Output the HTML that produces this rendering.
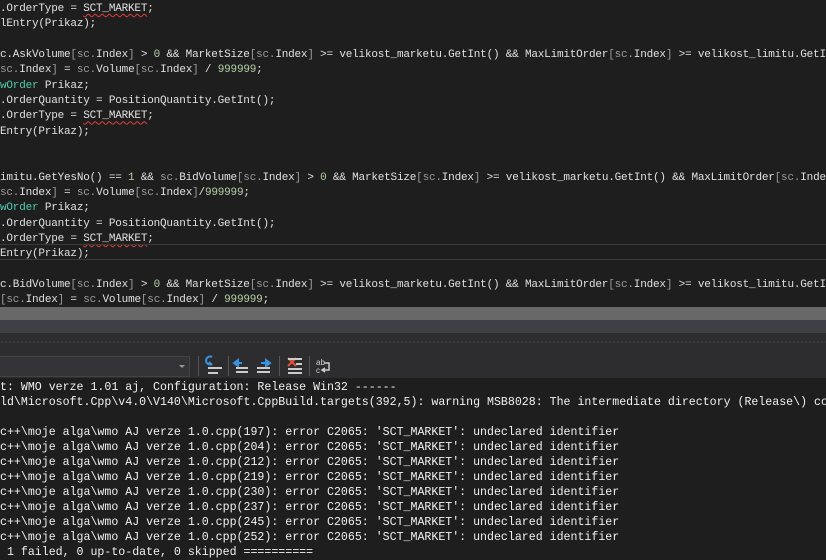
<!DOCTYPE html>
<html><head><meta charset="utf-8"><style>
body{margin:0;width:826px;height:560px;overflow:hidden;background:#1e1e1e;position:relative}
.code{position:absolute;left:0;top:0;width:826px;height:307px;background:#1e1e1e;overflow:hidden}
.code pre{margin:0;padding-top:2px;font-family:"Liberation Mono",monospace;font-size:11px;letter-spacing:-0.2px;line-height:15.33px;color:#e0e0e0;white-space:pre;overflow:hidden}
.g{color:#9b9b9b}.n{color:#b5cea8}.t{color:#4ec9b0}
.sq{text-decoration:underline wavy #e0403a;text-decoration-thickness:1px;text-underline-offset:2px}
.cur{position:absolute;left:0;top:244px;width:826px;height:14px;border-top:1px solid #3a3a3a;border-bottom:1px solid #3a3a3a}
.out{position:absolute;left:0;top:378px;width:826px;height:182px;background:#1e1e1e;overflow:hidden}
.out pre{margin:0;padding-top:2px;font-family:"Liberation Mono",monospace;font-size:11.6px;line-height:15px;color:#f1f1f1;white-space:pre;overflow:hidden}
.sep{position:absolute;top:356px;width:1px;height:20px;background:#555}
</style></head><body>
<div class="code"><pre>.OrderType = <span class="sq">SCT_MARKET</span>;
lEntry(Prikaz);

c.AskVolume<span class="g">[sc.</span>Index<span class="g">]</span> &gt; <span class="n">0</span> &amp;&amp; MarketSize<span class="g">[sc.</span>Index<span class="g">]</span> &gt;= velikost_marketu.GetInt() &amp;&amp; MaxLimitOrder<span class="g">[sc.</span>Index<span class="g">]</span> &gt;= velikost_limitu.GetInt()
<span class="g">sc.</span>Index<span class="g">]</span> = <span class="g">sc.</span>Volume<span class="g">[sc.</span>Index<span class="g">]</span> / <span class="n">999999</span>;
<span class="t">wOrder</span> Prikaz;
.OrderQuantity = PositionQuantity.GetInt();
.OrderType = <span class="sq">SCT_MARKET</span>;
Entry(Prikaz);


imitu.GetYesNo() == <span class="n">1</span> &amp;&amp; <span class="g">sc.</span>BidVolume<span class="g">[sc.</span>Index<span class="g">]</span> &gt; <span class="n">0</span> &amp;&amp; MarketSize<span class="g">[sc.</span>Index<span class="g">]</span> &gt;= velikost_marketu.GetInt() &amp;&amp; MaxLimitOrder<span class="g">[sc.</span>Index
<span class="g">sc.</span>Index<span class="g">]</span> = <span class="g">sc.</span>Volume<span class="g">[sc.</span>Index<span class="g">]</span>/<span class="n">999999</span>;
<span class="t">wOrder</span> Prikaz;
.OrderQuantity = PositionQuantity.GetInt();
.OrderType = <span class="sq">SCT_MARKET</span>;
Entry(Prikaz);

c.BidVolume<span class="g">[sc.</span>Index<span class="g">]</span> &gt; <span class="n">0</span> &amp;&amp; MarketSize<span class="g">[sc.</span>Index<span class="g">]</span> &gt;= velikost_marketu.GetInt() &amp;&amp; MaxLimitOrder<span class="g">[sc.</span>Index<span class="g">]</span> &gt;= velikost_limitu.GetInt()
<span class="g">[sc.</span>Index<span class="g">]</span> = <span class="g">sc.</span>Volume<span class="g">[sc.</span>Index<span class="g">]</span> / <span class="n">999999</span>;</pre>
<div class="cur"></div></div>
<div style="position:absolute;left:0;top:307px;width:826px;height:13px;background:#686868"></div>
<div style="position:absolute;left:0;top:320px;width:826px;height:13px;background:#3f3f46"></div>
<div style="position:absolute;left:0;top:333px;width:826px;height:45px;background:#2d2d30"></div>
<div style="position:absolute;left:0;top:341px;width:826px;height:2px;background-image:radial-gradient(#46464a 45%,transparent 50%);background-size:4px 2px"></div>
<div style="position:absolute;left:0;top:356px;width:189px;height:19px;background:#333337;border:1px solid #434346;border-left:none"></div>
<div style="position:absolute;left:179px;top:365px;width:0;height:0;border-left:3px solid transparent;border-right:3px solid transparent;border-top:3px solid #999"></div>
<div class="sep" style="left:198px"></div><div class="sep" style="left:228px"></div><div class="sep" style="left:279px"></div><div class="sep" style="left:309px"></div>
<svg style="position:absolute;left:200px;top:354px" width="140" height="24">
<path d="M12 3a4 4 0 1 0 0 7M9 8l3 3" stroke="#3794e0" stroke-width="2" fill="none"/>
<rect x="8" y="13" width="14" height="2" fill="#ccc"/><rect x="8" y="18" width="10" height="2" fill="#ccc"/>
<path d="M38 6l-4 3 4 3zM37 9h5" stroke="#3794e0" stroke-width="2" fill="#3794e0"/>
<rect x="36" y="13" width="12" height="2" fill="#ccc"/><rect x="36" y="17" width="12" height="2" fill="#ccc"/>
<path d="M66 6l4 3-4 3zM61 9h6" stroke="#3794e0" stroke-width="2" fill="#3794e0"/>
<rect x="57" y="13" width="13" height="2" fill="#ccc"/><rect x="57" y="17" width="13" height="2" fill="#ccc"/>
<path d="M88 4l8 8M96 4l-8 8" stroke="#e0503a" stroke-width="2"/>
<rect x="88" y="4" width="14" height="2" fill="#ccc"/><rect x="96" y="9" width="6" height="2" fill="#ccc"/><rect x="88" y="14" width="14" height="2" fill="#ccc"/><rect x="88" y="18" width="14" height="2" fill="#ccc"/>
<text x="116" y="11" font-family="Liberation Sans" font-size="8" fill="#ccc">ab</text><text x="116" y="19" font-family="Liberation Sans" font-size="8" fill="#ccc">c</text>
<path d="M124 9h5v7h-6M125 14l-3 2 3 2" stroke="#ccc" stroke-width="1.5" fill="none"/>
</svg>
<div class="out"><pre>t: WMO verze 1.01 aj, Configuration: Release Win32 ------
ld\Microsoft.Cpp\v4.0\V140\Microsoft.CppBuild.targets(392,5): warning MSB8028: The intermediate directory (Release\) contains

c++\moje alga\wmo AJ verze 1.0.cpp(197): error C2065: 'SCT_MARKET': undeclared identifier
c++\moje alga\wmo AJ verze 1.0.cpp(204): error C2065: 'SCT_MARKET': undeclared identifier
c++\moje alga\wmo AJ verze 1.0.cpp(212): error C2065: 'SCT_MARKET': undeclared identifier
c++\moje alga\wmo AJ verze 1.0.cpp(219): error C2065: 'SCT_MARKET': undeclared identifier
c++\moje alga\wmo AJ verze 1.0.cpp(230): error C2065: 'SCT_MARKET': undeclared identifier
c++\moje alga\wmo AJ verze 1.0.cpp(237): error C2065: 'SCT_MARKET': undeclared identifier
c++\moje alga\wmo AJ verze 1.0.cpp(245): error C2065: 'SCT_MARKET': undeclared identifier
c++\moje alga\wmo AJ verze 1.0.cpp(252): error C2065: 'SCT_MARKET': undeclared identifier
 1 failed, 0 up-to-date, 0 skipped ==========</pre></div>
</body></html>
